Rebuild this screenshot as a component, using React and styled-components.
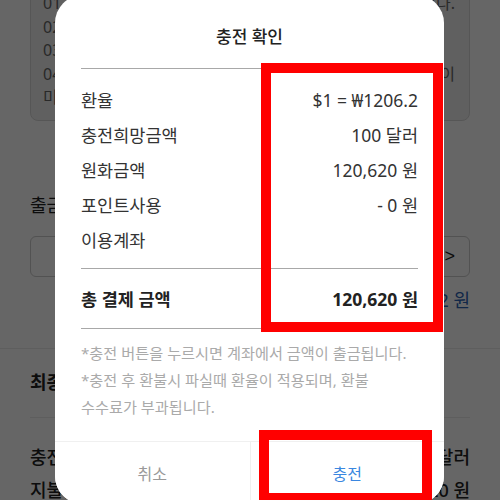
import styled, { createGlobalStyle } from 'styled-components'

const GlobalStyle = createGlobalStyle`
  html, body {
    margin: 0;
    padding: 0;
  }
  body {
    font-family: "Noto Sans", "Noto Sans CJK KR", sans-serif;
    background: #fff;
    color: #222;
  }
`

const rows = [
  { label: '환율', value: '$1 = ₩1206.2' },
  { label: '충전희망금액', value: '100 달러' },
  { label: '원화금액', value: '120,620 원' },
  { label: '포인트사용', value: '- 0 원' },
  { label: '이용계좌', value: '' },
]

const notices = [
  { left: '01. 충전 신청 후 영업일 기준 1~2일 이내 처리됩', right: '니다.' },
  { left: '02. 주말 및 공휴일에는 처리가 지연됩니다.' },
  { left: '03. 충전 금액은 1달러 단위로 신청 가능합니다.' },
  { left: '04. 환율은 신청 시점 기준으로 적용되며 변동될 수', right: '이' },
  { left: '미화 외 통화는 지원하지 않습니다.' },
]

const App = () => {
  return (
    <>
      <GlobalStyle />
      <StyledScreen>
        <StyledPage>
          <StyledNoticeCard>
            {notices.map((n, i) => (
              <StyledNoticeLine key={i}>
                <span>{n.left}</span>
                {n.right && <span>{n.right}</span>}
              </StyledNoticeLine>
            ))}
          </StyledNoticeCard>
          <StyledFieldLabel>출금계좌</StyledFieldLabel>
          <StyledSelect>
            <StyledChevron>&gt;</StyledChevron>
          </StyledSelect>
          <StyledBalance>출금가능금액 1,523,482 원</StyledBalance>
        </StyledPage>
        <StyledSectionDivider />
        <StyledPage>
          <StyledSectionTitle>최종 결제 정보</StyledSectionTitle>
          <StyledRowDivider />
          <StyledSummaryRow $first>
            <span>충전금액</span>
            <span>100 달러</span>
          </StyledSummaryRow>
          <StyledSummaryRow>
            <span>지불금액</span>
            <span>120,620 원</span>
          </StyledSummaryRow>
        </StyledPage>

        <StyledOverlay />

        <StyledDialog>
          <StyledDialogTitle>충전 확인</StyledDialogTitle>
          <StyledDialogBody>
            <StyledLine />
            <StyledRowList>
              {rows.map((r) => (
                <StyledRow key={r.label}>
                  <span>{r.label}</span>
                  <span>{r.value}</span>
                </StyledRow>
              ))}
            </StyledRowList>
            <StyledLine />
            <StyledTotalRow>
              <span>총 결제 금액</span>
              <span>120,620 원</span>
            </StyledTotalRow>
            <StyledLine />
            <StyledNotes>
              <p>*충전 버튼을 누르시면 계좌에서 금액이 출금됩니다.</p>
              <p>*충전 후 환불시 파실때 환율이 적용되며, 환불 수수료가 부과됩니다.</p>
            </StyledNotes>
          </StyledDialogBody>
          <StyledButtonBar>
            <StyledDialogButton>취소</StyledDialogButton>
            <StyledDialogButton $primary>충전</StyledDialogButton>
          </StyledButtonBar>
        </StyledDialog>

        <StyledMark $left={261} $top={63} $width={182} $height={269} />
        <StyledMark $left={259} $top={430} $width={173} $height={73} />
      </StyledScreen>
    </>
  )
}

export default App

const StyledScreen = styled.div`
  position: relative;
  width: 500px;
  height: 500px;
  overflow: hidden;
  background: #fff;
`

const StyledPage = styled.div`
  display: flex;
  flex-direction: column;
  padding: 0 30px;
`

const StyledNoticeCard = styled.div`
  display: flex;
  flex-direction: column;
  margin-top: -19px;
  padding: 10px 14px 10px 12px;
  background: #f0f0f0;
  border: 1px solid #d8d8d8;
  border-radius: 8px;
`

const StyledNoticeLine = styled.div`
  display: flex;
  justify-content: space-between;
  font-size: 16px;
  line-height: 23.5px;
  color: #666;
  white-space: nowrap;
`

const StyledFieldLabel = styled.div`
  margin-top: 72px;
  font-size: 18px;
  line-height: 25px;
  color: #222;
`

const StyledSelect = styled.div`
  display: flex;
  align-items: center;
  justify-content: flex-end;
  margin-top: 18px;
  height: 41px;
  box-sizing: border-box;
  padding: 0 14px;
  border: 1px solid #ccc;
  border-radius: 6px;
`

const StyledChevron = styled.span`
  font-family: "Liberation Sans", sans-serif;
  font-size: 18px;
  color: #222;
`

const StyledBalance = styled.div`
  margin-top: 11px;
  text-align: right;
  font-size: 18px;
  line-height: 25px;
  color: #2c64b4;
`

const StyledSectionDivider = styled.div`
  margin-top: 35px;
  height: 1px;
  background: #ececec;
`

const StyledSectionTitle = styled.div`
  margin-top: 21px;
  font-size: 18px;
  font-weight: 700;
  line-height: 25px;
  color: #222;
`

const StyledRowDivider = styled.div`
  margin-top: 22px;
  height: 1px;
  background: #ececec;
`

const StyledSummaryRow = styled.div`
  display: flex;
  justify-content: space-between;
  margin-top: ${(p) => (p.$first ? '27px' : '8px')};
  font-size: 18px;
  font-weight: 500;
  line-height: 25px;
  color: #222;
`

const StyledOverlay = styled.div`
  position: absolute;
  inset: 0;
  background: rgba(0, 0, 0, 0.6);
`

const StyledDialog = styled.div`
  position: absolute;
  left: 55px;
  top: -5px;
  width: 389px;
  display: flex;
  flex-direction: column;
  background: #fff;
  border-radius: 28px;
  overflow: hidden;
`

const StyledDialogTitle = styled.div`
  padding: 31px 0 20px;
  text-align: center;
  font-size: 17px;
  font-weight: 500;
  line-height: 22px;
  color: #222;
`

const StyledDialogBody = styled.div`
  display: flex;
  flex-direction: column;
  padding: 0 26px;
`

const StyledLine = styled.div`
  height: 1px;
  background: #a8a8a8;
`

const StyledRowList = styled.div`
  display: flex;
  flex-direction: column;
  padding: 13px 0 11px;
`

const StyledRow = styled.div`
  display: flex;
  align-items: center;
  justify-content: space-between;
  height: 35px;
  font-size: 17.5px;
  color: #333;
`

const StyledTotalRow = styled.div`
  display: flex;
  align-items: center;
  justify-content: space-between;
  height: 59px;
  font-size: 17.5px;
  font-weight: 700;
  color: #222;
`

const StyledNotes = styled.div`
  padding: 11px 0 20px;
  font-size: 15.2px;
  line-height: 27px;
  color: #aaa;
  word-break: keep-all;

  p {
    margin: 0;
  }
`

const StyledButtonBar = styled.div`
  display: grid;
  grid-template-columns: 1fr 1fr;
  border-top: 1px solid #f0f0f0;
`

const StyledDialogButton = styled.button`
  height: 62px;
  padding: 0;
  border: none;
  border-left: ${(p) => (p.$primary ? '1px solid #f0f0f0' : 'none')};
  background: #fff;
  font-family: inherit;
  font-size: 16px;
  color: ${(p) => (p.$primary ? '#3a87e0' : '#999')};
  cursor: pointer;
`

const StyledMark = styled.div`
  position: absolute;
  left: ${(p) => p.$left}px;
  top: ${(p) => p.$top}px;
  width: ${(p) => p.$width}px;
  height: ${(p) => p.$height}px;
  box-sizing: border-box;
  border: 10px solid #ff0000;
  pointer-events: none;
`
